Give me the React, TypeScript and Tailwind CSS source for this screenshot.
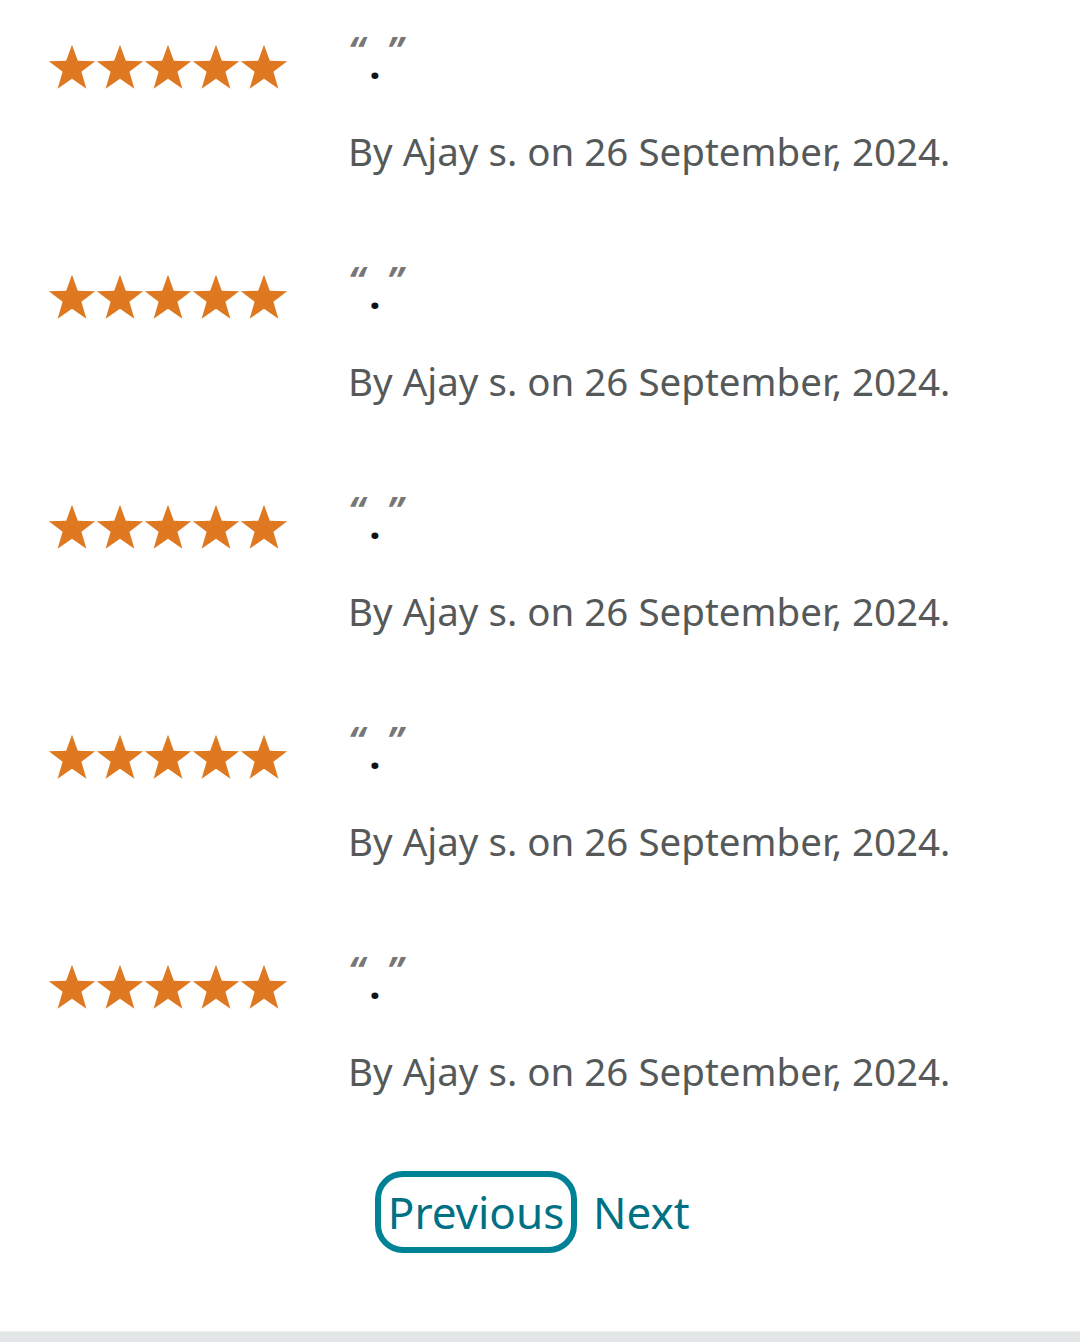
import React from 'react'

const REVIEWS = [1, 2, 3, 4, 5].map((i) => ({ id: i, author: 'Ajay s.', date: '26 September, 2024' }))

function Star() {
  return (
    <svg viewBox="0 0 24 23" className="h-[46px] w-[48px]">
      <path
        fill="#de7921"
        d="M12 0.4L14.9 8.4L23.6 8.6L16.7 13.9L19.2 22.4L12 17.4L4.8 22.4L7.3 13.9L0.4 8.6L9.1 8.4Z"
      />
    </svg>
  )
}

function ReviewRow({ author, date }: { author: string; date: string }) {
  return (
    <div className="flex h-[230px]">
      <div className="flex w-[348px] pl-[48px] pt-[44px]">
        {[0, 1, 2, 3, 4].map((s) => (
          <Star key={s} />
        ))}
      </div>
      <div className="flex flex-col pt-[30px]">
        <div className="flex h-[54px] items-start">
          <span className="text-[40px] font-semibold italic leading-none text-[#777]">&ldquo;</span>
          <span className="self-end pl-[5px] pr-[6px] text-[40px] font-bold leading-none text-[#111]">.</span>
          <span className="text-[40px] font-semibold italic leading-none text-[#777]">&rdquo;</span>
        </div>
        <div className="mt-[44px] text-[38.5px] leading-[46px] text-[#565959]">
          By {author} on {date}.
        </div>
      </div>
    </div>
  )
}

export default function App() {
  return (
    <div className="flex min-h-[1342px] w-[1080px] flex-col bg-white" style={{ fontFamily: '"Noto Sans", Arial, sans-serif' }}>
      <div className="flex flex-col">
        {REVIEWS.map((r) => (
          <ReviewRow key={r.id} author={r.author} date={r.date} />
        ))}
      </div>
      <div className="flex items-center gap-[16px] pl-[375px] pt-[21px]">
        <button className="flex h-[82px] w-[202px] items-center justify-center rounded-[28px] border-[6px] border-[#008296] text-[44px] text-[#007185]">
          Previous
        </button>
        <span className="text-[44px] text-[#007185]">Next</span>
      </div>
      <div className="flex-1" />
      <div className="h-[11px] border-t border-[#eef0f0] bg-[#e3e6e6]" />
    </div>
  )
}
